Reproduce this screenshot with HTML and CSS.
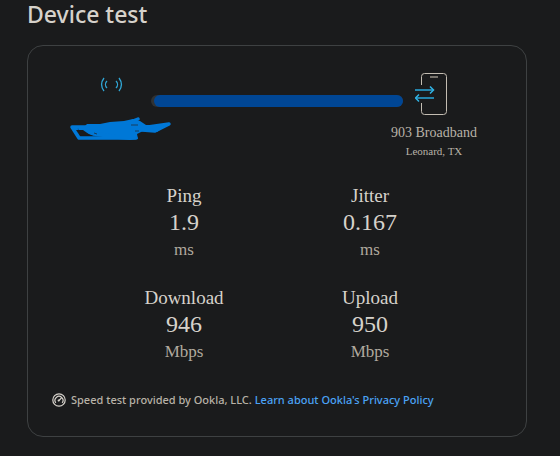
FILE: index.html
```html
<!DOCTYPE html>
<html lang="en">
<head>
<meta charset="utf-8">
<meta name="viewport" content="width=device-width, initial-scale=1">
<title>Device test</title>
<link rel="stylesheet" href="styles.css">
</head>
<body>
<main class="page">
  <h1 class="title">Device test</h1>
  <section class="card">
    <div class="route">
      <div class="endpoint">
        <svg class="signal" viewBox="0 0 24 18" aria-hidden="true">
          <g class="stroke-cyan">
            <path d="M4 2C1 6 1 11 4 15M7 5C5 7 5 10 7 12M16 5C18 7 18 10 16 12M19 2C22 6 22 11 19 15"/>
          </g>
        </svg>
        <svg class="scribble" viewBox="52 116 120 26" aria-hidden="true">
          <path class="ink-fill" d="M83 128L87 124L100 124L110 122L124 121L133 119L140 121L146 125L157 125L161 129L157 132L143 131L137 134L138 139L130 140L118 139L95 136L84 131Z"/>
          <path class="ink-line" d="M86 127H72L79 138H136M79 138L76 129M94 134L80 129M101 134L122 138L136 138M128 123L138 119M148 127L169 124L155 131L142 130"/>
          <path class="ink-gap" d="M131 125H138M94 133L97 134M135 131H139"/>
          <path class="ink-hole" d="M76 130L83 130L90 135L80 136Z"/>
        </svg>
      </div>
      <div class="track" role="img" aria-label="Test progress"><div class="track-fill"></div></div>
      <div class="endpoint">
        <svg class="phone" viewBox="0 0 38 44" aria-hidden="true">
          <path class="phone-body" d="M6.500 13V4.500Q6.500 1.500 9.500 1.500H28.500Q31.500 1.500 31.500 4.500V39.500Q31.500 42.500 28.500 42.500H9.500Q6.500 42.500 6.500 39.500V31"/>
          <path class="phone-speaker" d="M15 5H23"/>
          <path class="arrow-line" d="M0 18H18M1 26H19"/>
          <path class="arrow-head" d="M15 14.500L18.500 18L15 21.500M4 22.500L.5 26L4 29.500"/>
        </svg>
        <p class="provider">903 Broadband</p>
        <p class="place">Leonard, TX</p>
      </div>
    </div>
    <dl class="metrics">
      <div class="metric"><dt>Ping</dt><dd class="value">1.9</dd><dd class="unit">ms</dd></div>
      <div class="metric"><dt>Jitter</dt><dd class="value">0.167</dd><dd class="unit">ms</dd></div>
      <div class="metric"><dt>Download</dt><dd class="value">946</dd><dd class="unit">Mbps</dd></div>
      <div class="metric"><dt>Upload</dt><dd class="value">950</dd><dd class="unit">Mbps</dd></div>
    </dl>
    <footer class="credit">
      <svg class="gauge" viewBox="0 0 14 14" aria-hidden="true">
        <circle cx="7" cy="7" r="6.200"/>
        <path d="M3.800 9.800A4 4 0 1 1 10.200 9.800M6.500 8L9.500 4.800"/>
        <circle class="gauge-hub" cx="6.600" cy="7.600" r="1"/>
      </svg>
      <p>Speed test provided by Ookla, LLC. <a href="#privacy">Learn about Ookla's Privacy Policy</a></p>
    </footer>
  </section>
</main>
</body>
</html>
```
FILE: styles.css
```css
* {
  box-sizing: border-box;
}

body {
  margin: 0;
  background: #1a1b1c;
  color: #d6d2cb;
  font-family: "Noto Sans", "Open Sans", sans-serif;
}

h1, p, dl, dd {
  margin: 0;
}

svg {
  display: block;
  flex: none;
  fill: none;
}

.page {
  padding: 0 33px 19px 27px;
}

.title {
  font-size: 23px;
  font-weight: 500;
  line-height: 28px;
}

.card {
  margin-top: 17px;
  padding: 26px 24px 28px;
  border: 1px solid #3e4142;
  border-radius: 16px;
}

.route {
  display: grid;
  grid-template-columns: 78px 1fr 62px;
  padding: 0 37px 0 21px;
  font-family: "Liberation Serif", serif;
}

.endpoint {
  display: flex;
  flex-direction: column;
  align-items: center;
  color: #b8b2a7;
  text-align: center;
  white-space: nowrap;
}

.signal {
  width: 24px;
  height: 18px;
  margin-top: 4px;
}

.stroke-cyan {
  stroke: #30a7d6;
  stroke-width: 1.3;
}

.scribble {
  width: 120px;
  height: 26px;
  margin-top: 22px;
}

.ink-fill {
  fill: #0078d7;
}

.ink-line {
  stroke: #0078d7;
  stroke-width: 3.5;
  stroke-linecap: round;
  stroke-linejoin: round;
}

.ink-gap {
  stroke: #173c5c;
  stroke-width: 1;
}

.ink-hole {
  fill: #1a1b1c;
}

.track {
  height: 12px;
  margin-top: 23px;
  padding-left: 3px;
  border-radius: 6px;
  background: #303233;
}

.track-fill {
  height: 100%;
  border-radius: 6px;
  background: #004694;
}

.phone {
  width: 38px;
  height: 44px;
}

.phone-body {
  stroke: #c3bdb2;
}

.phone-speaker {
  stroke: #77736c;
  stroke-width: 2;
}

.arrow-line {
  stroke: #2484ab;
  stroke-width: 2;
}

.arrow-head {
  stroke: #31b4e5;
  stroke-width: 1.5;
}

.provider {
  margin-top: 8px;
  font-size: 14px;
  line-height: 18px;
}

.place {
  font-size: 11px;
  line-height: 18px;
}

.metrics {
  display: grid;
  grid-template-columns: 1fr 1fr;
  row-gap: 22px;
  max-width: 372px;
  margin: 24px auto 0;
  font-family: "Liberation Serif", serif;
  text-align: center;
}

.metric dt {
  font-size: 19px;
  line-height: 24px;
}

.value {
  font-size: 24px;
  line-height: 28px;
}

.unit {
  color: #b0a99e;
  font-size: 17px;
  line-height: 28px;
}

.credit {
  display: flex;
  align-items: center;
  gap: 5px;
  margin-top: 26px;
  color: #b8b2a7;
  font-size: 11px;
  font-weight: 500;
  line-height: 16px;
}

.credit a {
  color: #4ba3f5;
  text-decoration: none;
}

.gauge {
  width: 14px;
  height: 14px;
  stroke: #d6d2cb;
  stroke-width: 1.2;
}

.gauge-hub {
  fill: #d6d2cb;
  stroke: none;
}
```
